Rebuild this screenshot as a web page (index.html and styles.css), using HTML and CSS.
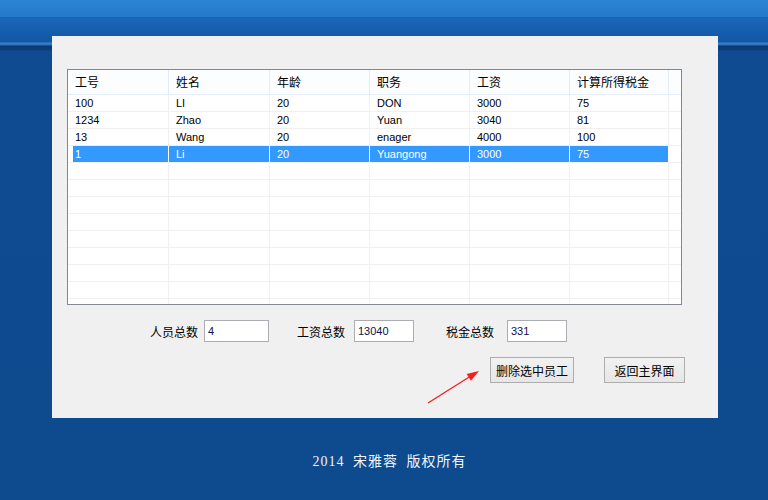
FILE: index.html
```html
<!DOCTYPE html>
<html>
<head>
<meta charset="utf-8">
<link rel="stylesheet" href="styles.css">
</head>
<body>
<div class="page">
  <div class="panel">
    <div class="grid">
      <div class="hrow">
        <div class="hcell w1">工号</div>
        <div class="hcell w2">姓名</div>
        <div class="hcell w3">年龄</div>
        <div class="hcell w4">职务</div>
        <div class="hcell w5">工资</div>
        <div class="hcell w6">计算所得税金</div>
        <div class="hcell fill"></div>
      </div>
      <div class="row">
        <div class="cell w1">100</div><div class="cell w2">LI</div><div class="cell w3">20</div><div class="cell w4">DON</div><div class="cell w5">3000</div><div class="cell w6">75</div><div class="cell fill"></div>
      </div>
      <div class="row">
        <div class="cell w1">1234</div><div class="cell w2">Zhao</div><div class="cell w3">20</div><div class="cell w4">Yuan</div><div class="cell w5">3040</div><div class="cell w6">81</div><div class="cell fill"></div>
      </div>
      <div class="row">
        <div class="cell w1">13</div><div class="cell w2">Wang</div><div class="cell w3">20</div><div class="cell w4">enager</div><div class="cell w5">4000</div><div class="cell w6">100</div><div class="cell fill"></div>
      </div>
      <div class="row sel">
        <div class="cell w1">1</div><div class="cell w2">Li</div><div class="cell w3">20</div><div class="cell w4">Yuangong</div><div class="cell w5">3000</div><div class="cell w6">75</div><div class="cell fill"></div>
      </div>
      <div class="row"><div class="cell w1"></div><div class="cell w2"></div><div class="cell w3"></div><div class="cell w4"></div><div class="cell w5"></div><div class="cell w6"></div><div class="cell fill"></div></div>
      <div class="row"><div class="cell w1"></div><div class="cell w2"></div><div class="cell w3"></div><div class="cell w4"></div><div class="cell w5"></div><div class="cell w6"></div><div class="cell fill"></div></div>
      <div class="row"><div class="cell w1"></div><div class="cell w2"></div><div class="cell w3"></div><div class="cell w4"></div><div class="cell w5"></div><div class="cell w6"></div><div class="cell fill"></div></div>
      <div class="row"><div class="cell w1"></div><div class="cell w2"></div><div class="cell w3"></div><div class="cell w4"></div><div class="cell w5"></div><div class="cell w6"></div><div class="cell fill"></div></div>
      <div class="row"><div class="cell w1"></div><div class="cell w2"></div><div class="cell w3"></div><div class="cell w4"></div><div class="cell w5"></div><div class="cell w6"></div><div class="cell fill"></div></div>
      <div class="row"><div class="cell w1"></div><div class="cell w2"></div><div class="cell w3"></div><div class="cell w4"></div><div class="cell w5"></div><div class="cell w6"></div><div class="cell fill"></div></div>
      <div class="row"><div class="cell w1"></div><div class="cell w2"></div><div class="cell w3"></div><div class="cell w4"></div><div class="cell w5"></div><div class="cell w6"></div><div class="cell fill"></div></div>
      <div class="row"><div class="cell w1"></div><div class="cell w2"></div><div class="cell w3"></div><div class="cell w4"></div><div class="cell w5"></div><div class="cell w6"></div><div class="cell fill"></div></div>
      <div class="row"><div class="cell w1"></div><div class="cell w2"></div><div class="cell w3"></div><div class="cell w4"></div><div class="cell w5"></div><div class="cell w6"></div><div class="cell fill"></div></div>
    </div>

    <div class="stats">
      <span class="lab l1">人员总数</span><span class="box b65">4</span>
      <span class="lab l2">工资总数</span><span class="box b60 m9">13040</span>
      <span class="lab l3">税金总数</span><span class="box b60 m13">331</span>
    </div>

    <div class="actions">
      <div class="btn del">删除选中员工</div>
      <div class="btn back">返回主界面</div>
    </div>

    <svg class="arrow" width="666" height="382" viewBox="0 0 666 382">
      <line x1="376" y1="367" x2="418" y2="340.5" stroke="#ff1a1a" stroke-width="1.3"/>
      <polygon points="427,335 418.9,344.8 414.7,338" fill="#ff1a1a"/>
    </svg>
  </div>
  <div class="footer">2014 宋雅蓉 版权所有</div>
</div>
</body>
</html>
```

FILE: styles.css
```css
body {
  margin: 0;
}

.page {
  width: 768px;
  height: 500px;
  overflow: hidden;
  font-family: "Liberation Sans", "Noto Sans CJK SC", sans-serif;
  background:
    linear-gradient(to bottom,
      #2d85d5 0px, #2479ca 17px,
      #1a67b9 17px, #1257a6 42px,
      #3a84ca 43px, #2b6fb6 45px,
      #0a3970 46px, #0c3e7a 50px,
      #0f4b91 51px, #0e4a8e 100%);
}

.panel {
  position: relative;
  margin: 36px 0 0 52px;
  width: 666px;
  height: 382px;
  box-sizing: border-box;
  padding: 33px 0 0 15px;
  background: #f0f0f0;
}

/* list view */
.grid {
  width: 615px;
  height: 236px;
  box-sizing: border-box;
  border: 1px solid #828790;
  background: #fff;
  overflow: hidden;
}

.hrow {
  display: flex;
  height: 25px;
  box-sizing: border-box;
  border-bottom: 1px solid #e5edf8;
  background: #fcfdff;
}

.hcell {
  box-sizing: border-box;
  height: 24px;
  border-right: 1px solid #e3ebf7;
  padding-left: 7px;
  font-family: "Noto Sans CJK SC", sans-serif;
  font-size: 12px;
  line-height: 24px;
  color: #000;
  white-space: nowrap;
}

.row {
  display: flex;
  height: 17px;
  box-sizing: border-box;
  border-bottom: 1px solid #f0f0f0;
}

.cell {
  box-sizing: border-box;
  height: 16px;
  border-right: 1px solid #f0f0f0;
  padding-left: 7px;
  font-size: 11px;
  line-height: 16px;
  color: #000;
  white-space: nowrap;
}

.w1 { width: 101px; }
.w2 { width: 101px; }
.w3 { width: 100px; }
.w4 { width: 100px; }
.w5 { width: 100px; }
.w6 { width: 99px; }
.fill { flex: 1; border-right: none; }

.row.sel .cell {
  background: #3399ff;
  color: #fff;
  border-right-color: #fff;
}
.row.sel .cell.w1 {
  background: linear-gradient(to right, #fff 5px, #3399ff 5px);
}
.row.sel .cell.fill {
  background: #fff;
}

/* totals */
.stats {
  display: flex;
  align-items: center;
  height: 22px;
  margin-top: 15px;
  padding-left: 83px;
}

.lab {
  width: 48px;
  font-family: "Noto Sans CJK SC", sans-serif;
  font-size: 12px;
  color: #000;
  white-space: nowrap;
}
.l1 { margin-right: 6px; }
.l2 { margin-left: 28px; }
.l3 { margin-left: 32px; }

.box {
  height: 22px;
  box-sizing: border-box;
  border: 1px solid #abadb3;
  background: #fff;
  padding-left: 3px;
  font-size: 11px;
  line-height: 20px;
  color: #101050;
}
.b65 { width: 65px; }
.b60 { width: 60px; }
.m9 { margin-left: 9px; }
.m13 { margin-left: 13px; }

/* buttons */
.actions {
  display: flex;
  margin-top: 15px;
  padding-left: 423px;
}

.btn {
  height: 26px;
  box-sizing: border-box;
  border: 1px solid #adadad;
  background: linear-gradient(#f2f2f2, #e6e6e6);
  display: flex;
  align-items: center;
  justify-content: center;
  font-family: "Noto Sans CJK SC", sans-serif;
  font-size: 12px;
  color: #000;
}
.del { width: 84px; }
.back { width: 81px; margin-left: 30px; }

.arrow {
  position: absolute;
  left: 0;
  top: 0;
  pointer-events: none;
}

.footer {
  margin-top: 34px;
  padding-left: 11px;
  text-align: center;
  color: #f0f4fa;
  font-family: "Liberation Serif", "Noto Sans CJK SC", serif;
  font-size: 14px;
  letter-spacing: 1px;
  word-spacing: 4px;
  line-height: 20px;
}
```
